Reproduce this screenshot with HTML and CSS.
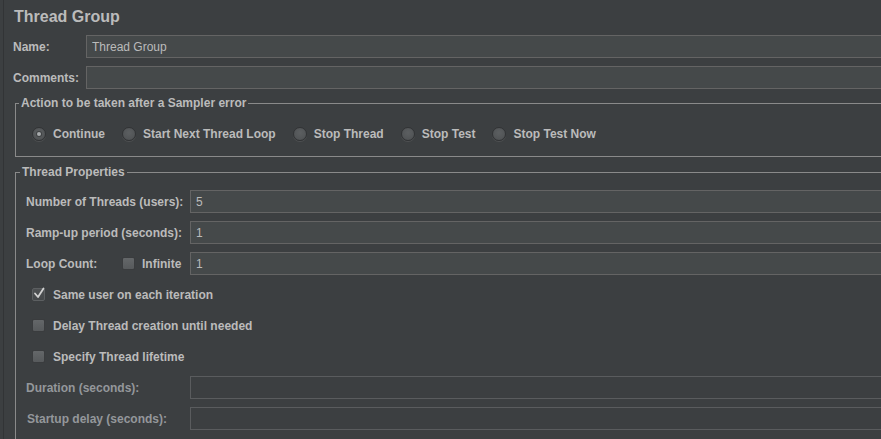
FILE: index.html
```html
<!DOCTYPE html>
<html>
<head>
<meta charset="utf-8">
<link rel="stylesheet" href="styles.css">
</head>
<body>
<div class="frame">
  <div class="page">
    <div class="title">Thread Group</div>
    <div class="top-row"><span class="lbl lbl-main">Name:</span><input class="field" type="text" value="Thread Group"></div>
    <div class="top-row"><span class="lbl lbl-main">Comments:</span><input class="field" type="text" value=""></div>

    <fieldset class="group group-action">
      <legend>Action to be taken after a Sampler error</legend>
      <div class="radios">
        <span class="radio-item"><span class="radio on"></span>Continue</span>
        <span class="radio-item"><span class="radio"></span>Start Next Thread Loop</span>
        <span class="radio-item"><span class="radio"></span>Stop Thread</span>
        <span class="radio-item"><span class="radio"></span>Stop Test</span>
        <span class="radio-item"><span class="radio"></span>Stop Test Now</span>
      </div>
    </fieldset>

    <fieldset class="group group-props">
      <legend>Thread Properties</legend>
      <div class="prop-row"><span class="lbl lbl-prop">Number of Threads (users):</span><input class="field" type="text" value="5"></div>
      <div class="prop-row"><span class="lbl lbl-prop">Ramp-up period (seconds):</span><input class="field" type="text" value="1"></div>
      <div class="prop-row">
        <span class="lbl lbl-loop">Loop Count:</span>
        <span class="check-inline"><span class="box"></span><span class="lbl">Infinite</span></span>
        <input class="field" type="text" value="1">
      </div>
      <div class="prop-row check-row"><span class="box checked"><svg viewBox="0 0 13 13" width="13" height="13"><polyline points="3,6.5 6,10 11.5,1.5" fill="none" stroke="#d2d2d2" stroke-width="1.8" stroke-linecap="round" stroke-linejoin="round"/></svg></span><span class="lbl">Same user on each iteration</span></div>
      <div class="prop-row check-row"><span class="box"></span><span class="lbl">Delay Thread creation until needed</span></div>
      <div class="prop-row check-row"><span class="box"></span><span class="lbl">Specify Thread lifetime</span></div>
      <div class="prop-row"><span class="lbl lbl-prop disabled">Duration (seconds):</span><input class="field field-disabled" type="text" value="" disabled></div>
      <div class="prop-row"><span class="lbl lbl-prop disabled lbl-nudge">Startup delay (seconds):</span><input class="field field-disabled" type="text" value="" disabled></div>
    </fieldset>
  </div>
</div>
</body>
</html>
```

FILE: styles.css
```css
html, body {
  margin: 0;
  padding: 0;
  background: #3c3f41;
  overflow: hidden;
  height: 100%;
}

body {
  font-family: "Liberation Sans", Arial, sans-serif;
  font-size: 12px;
  color: #bbbbbb;
}

.frame {
  margin-left: 3px;
  border-left: 1px solid #323436;
  height: 100%;
  padding-left: 9px;
}

.page {
  width: 1000px;
  padding-top: 7px;
}

.title {
  font-size: 16px;
  font-weight: bold;
  line-height: 20px;
  height: 20px;
  margin-left: 1px;
}

.top-row {
  display: flex;
  align-items: center;
  height: 23px;
  margin-top: 8px;
}

.lbl {
  font-weight: bold;
  line-height: 14px;
  white-space: nowrap;
}

.lbl-main {
  width: 73px;
  flex: none;
}

.field {
  flex: 1;
  box-sizing: border-box;
  height: 23px;
  margin: 0;
  padding: 0 5px;
  border: 1px solid #646464;
  background: #45494a;
  color: #bbbbbb;
  font-family: "Liberation Sans", Arial, sans-serif;
  font-size: 12px;
  outline: none;
  border-radius: 0;
}

.field-disabled {
  background: #3c3f41;
  border-color: #5a5c5e;
}

.group {
  margin: 0;
  padding: 0;
  border: 1px solid #8a8a8a;
  min-width: 0;
}

.group legend {
  font-weight: bold;
  font-size: 12px;
  line-height: 14px;
  padding: 0 2px;
  color: #bbbbbb;
}

.group-action {
  margin: 7px 0 0 2px;
}

.group-action legend {
  margin-left: 3px;
}

.group-props {
  margin: 8px 0 0 2px;
  padding-bottom: 40px;
}

.group-props legend {
  margin-left: 4px;
}

.radios {
  display: flex;
  align-items: center;
  height: 20px;
  margin: 14px 0 12px 16px;
  gap: 17px;
}

.radio-item {
  display: flex;
  align-items: center;
  gap: 8px;
  font-weight: bold;
  line-height: 14px;
  white-space: nowrap;
}

.radio {
  width: 14px;
  height: 14px;
  box-sizing: border-box;
  border-radius: 50%;
  border: 1px solid #313335;
  background: radial-gradient(circle at 50% 40%, #5c5f61 0%, #525557 65%, #4a4d4f 100%);
  box-shadow: 0 1px 0 rgba(130, 130, 130, 0.25);
  display: flex;
  align-items: center;
  justify-content: center;
  flex: none;
  margin-right: -1px;
}

.radio.on::after {
  content: "";
  width: 4px;
  height: 4px;
  border-radius: 50%;
  background: #a8abad;
  box-shadow: 0 0 0 1px #3e4143;
}

.prop-row {
  display: flex;
  align-items: center;
  height: 23px;
  margin-left: 10px;
  margin-top: 8px;
}

.group-props legend + .prop-row {
  margin-top: 11px;
}

.lbl-prop {
  width: 164px;
  flex: none;
}

.lbl-nudge {
  padding-left: 1px;
  width: 163px;
}

.lbl-loop {
  width: 96px;
  flex: none;
}

.check-inline {
  display: flex;
  align-items: center;
  gap: 7px;
  width: 68px;
  flex: none;
}

.box {
  width: 13px;
  height: 13px;
  box-sizing: border-box;
  border: 1px solid #3a3c3e;
  border-radius: 2px;
  background: linear-gradient(#646769, #575a5c);
  flex: none;
  display: flex;
  align-items: center;
  justify-content: center;
  overflow: visible;
}

.box.checked {
  background: linear-gradient(#4d5052, #45484a);
  border-color: #5c5f61;
}

.box svg {
  display: block;
  overflow: visible;
  margin-top: -2px;
}

.check-row {
  padding-left: 6px;
  gap: 8px;
}

.disabled {
  color: #94979b;
}
```
